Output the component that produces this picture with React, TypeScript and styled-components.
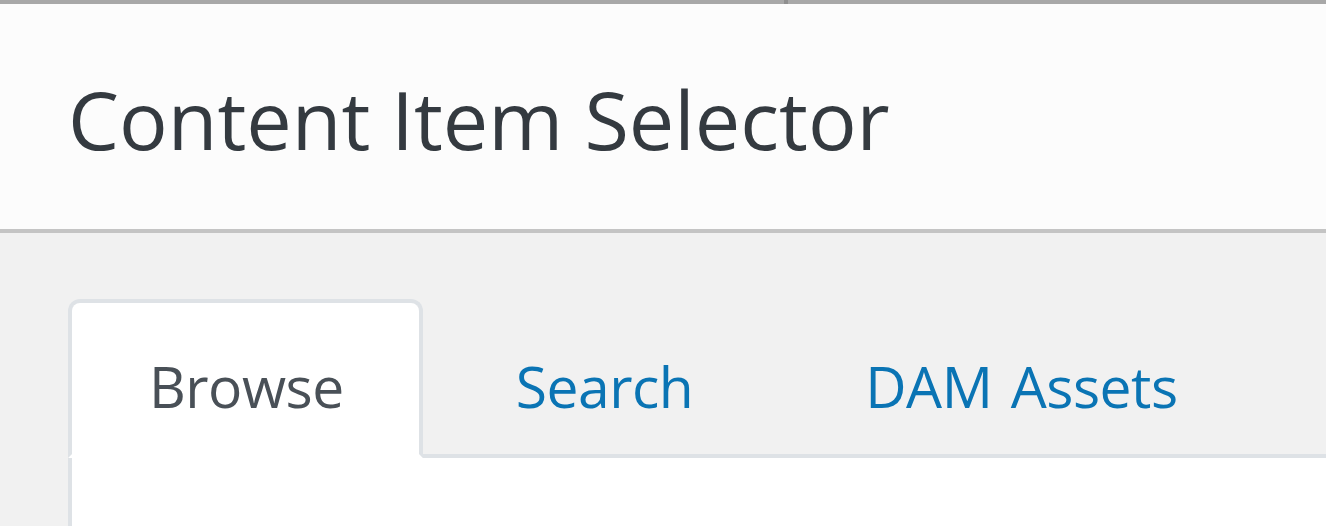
import { useState } from "react";
import styled, { createGlobalStyle } from "styled-components";

const GlobalStyle = createGlobalStyle`
  html, body {
    margin: 0;
    padding: 0;
    height: 100%;
    overflow: hidden;
    background: #fcfcfc;
  }

  body {
    font-family: "Open Sans", "Noto Sans", sans-serif;
  }

  #root {
    height: 100%;
  }
`;

const Page = styled.div`
  display: flex;
  flex-direction: column;
  height: 100%;
`;

const TopBar = styled.div`
  display: flex;
  flex: 0 0 4px;
  background: #a8a8a8;
`;

const TopPane = styled.div<{ $width?: number }>`
  flex: ${(props) => (props.$width ? `0 0 ${props.$width}px` : "1")};
`;

const PaneDivider = styled.div`
  flex: 0 0 4px;
  background: #8f8f8f;
`;

const Header = styled.header`
  flex: 0 0 229px;
  box-sizing: border-box;
  display: flex;
  align-items: flex-start;
  padding: 0 0 0 68px;
  background: #fcfcfc;
  border-bottom: 4px solid #c4c4c4;
`;

const Title = styled.h1`
  margin: 0;
  padding-top: 60px;
  font-size: 81px;
  font-weight: 400;
  line-height: 110px;
  color: #343a40;
  white-space: nowrap;
`;

const Body = styled.main`
  flex: 1;
  display: flex;
  flex-direction: column;
  padding: 66px 0 0 68px;
  background: #f1f1f1;
`;

const TabList = styled.nav`
  display: flex;
  border-bottom: 4px solid #dee2e6;
`;

const Tab = styled.button<{ $active: boolean }>`
  margin: 0 12px -4px 0;
  padding: 43px 75px 28px 77px;
  border: 4px solid transparent;
  border-radius: 12px 12px 0 0;
  background: transparent;
  font-family: inherit;
  font-size: 57px;
  line-height: 80px;
  letter-spacing: -0.5px;
  word-spacing: 4px;
  color: #0a74b4;
  cursor: pointer;
  white-space: nowrap;

  ${(props) =>
    props.$active &&
    `
    color: #495057;
    background: #fff;
    border-color: #dee2e6 #dee2e6 #fff;
  `}
`;

const TabPanel = styled.section`
  flex: 1;
  background: #fff;
  border-left: 4px solid #dee2e6;
`;

const tabs = ["Browse", "Search", "DAM Assets"];

export default function App() {
  const [active, setActive] = useState("Browse");

  return (
    <>
      <GlobalStyle />
      <Page>
        <TopBar>
          <TopPane $width={784} />
          <PaneDivider />
          <TopPane />
        </TopBar>
        <Header>
          <Title>Content Item Selector</Title>
        </Header>
        <Body>
          <TabList>
            {tabs.map((tab) => (
              <Tab
                key={tab}
                $active={tab === active}
                onClick={() => setActive(tab)}
              >
                {tab}
              </Tab>
            ))}
          </TabList>
          <TabPanel />
        </Body>
      </Page>
    </>
  );
}
